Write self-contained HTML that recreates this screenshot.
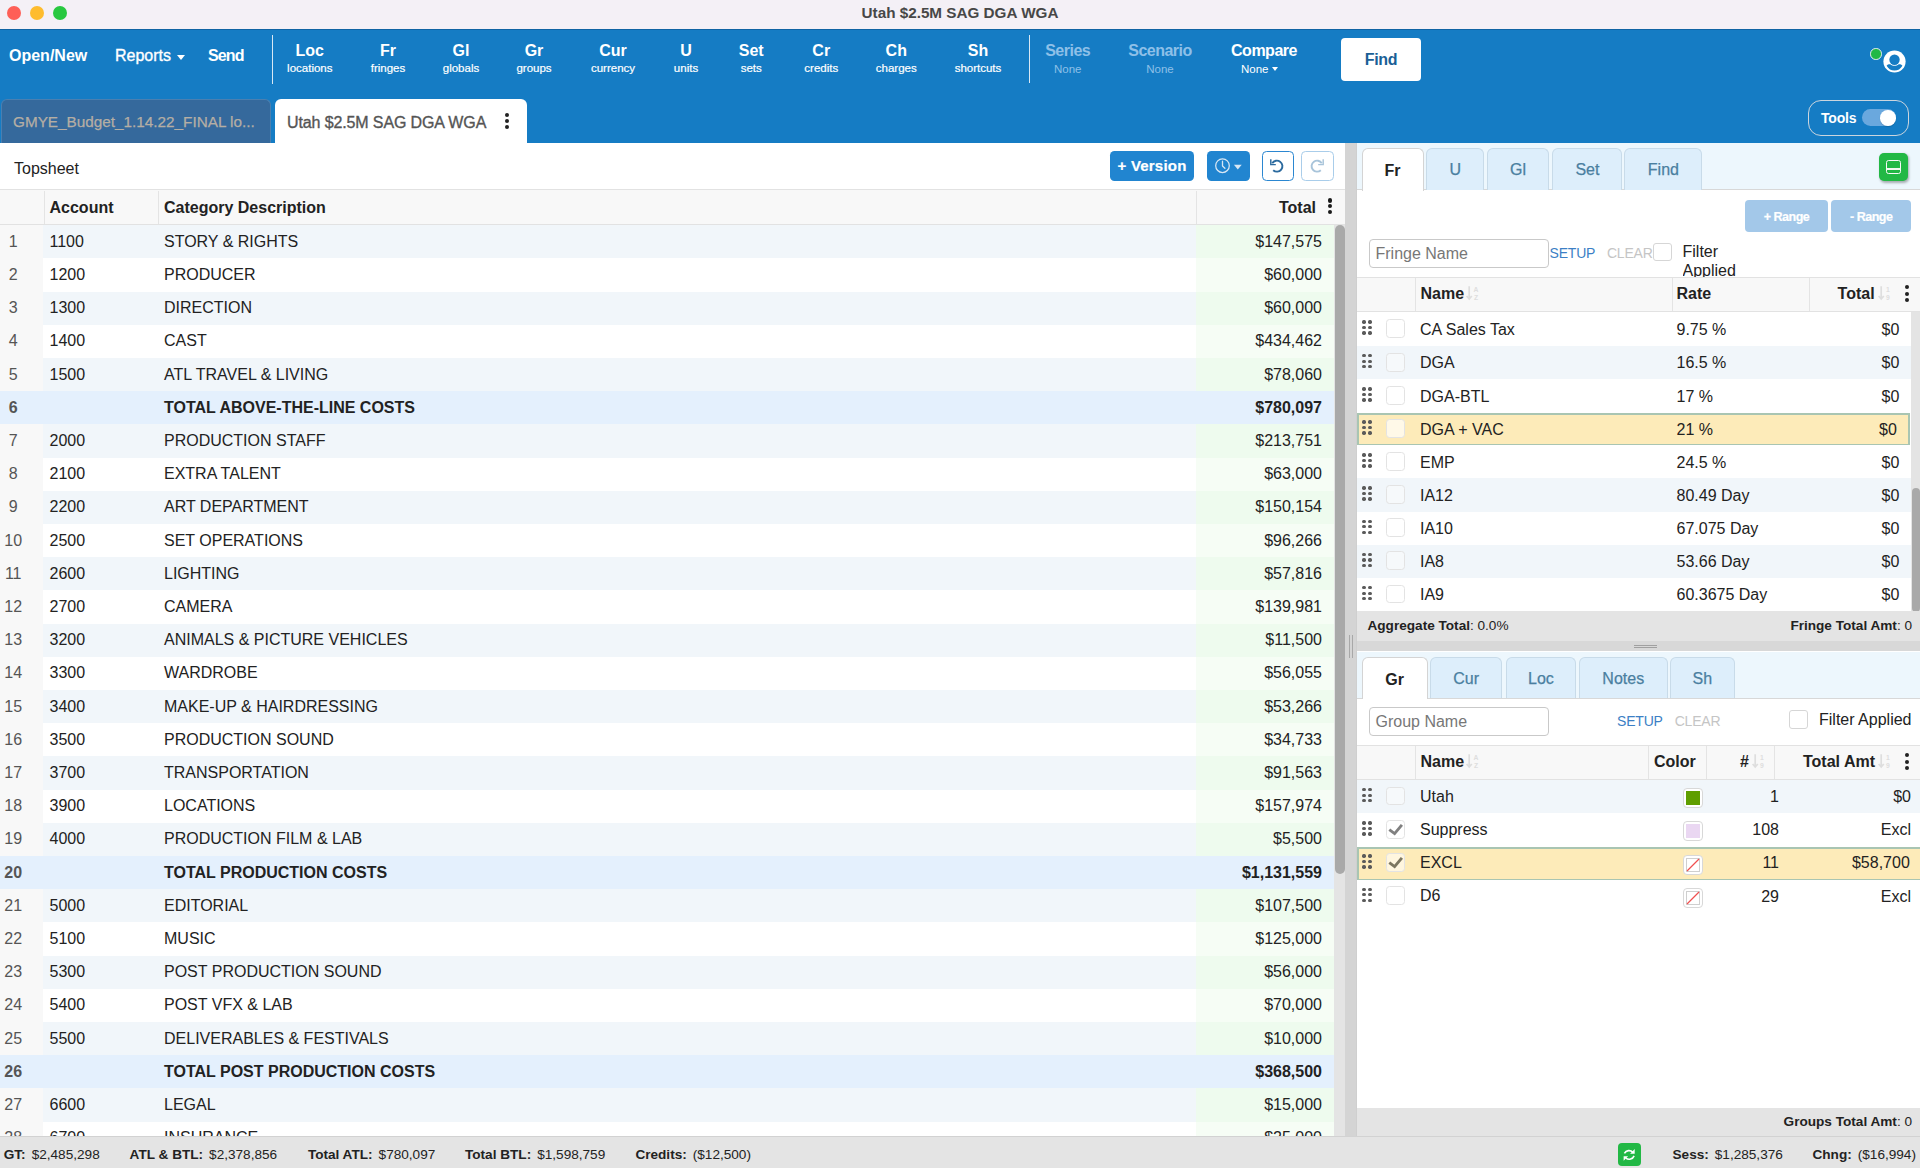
<!DOCTYPE html>
<html><head><meta charset="utf-8"><style>
*{box-sizing:border-box;margin:0;padding:0}
html,body{width:1920px;height:1168px;overflow:hidden;background:#fff;font-family:"Liberation Sans", sans-serif;}
.a{position:absolute;white-space:nowrap}
.tb-main{position:absolute;color:#fff;font-weight:700;font-size:16px;line-height:16px;text-align:center;width:120px}
.tb-sub{position:absolute;color:#fff;font-size:11.5px;line-height:12px;text-align:center;width:120px}
.row{position:absolute;left:0;width:1334px;height:34px}
.cell{position:absolute;top:0;height:100%;font-size:16px;color:#222;display:flex;align-items:center;white-space:nowrap}
</style></head><body>

<div class="a" style="left:0;top:0;width:1920px;height:29px;background:#f4f0f6"></div>
<div class="a" style="left:6.5px;top:6px;width:14px;height:14px;border-radius:50%;background:#fe5f57"></div>
<div class="a" style="left:29.5px;top:6px;width:14px;height:14px;border-radius:50%;background:#febc2e"></div>
<div class="a" style="left:52.5px;top:6px;width:14px;height:14px;border-radius:50%;background:#28c840"></div>
<div class="a" style="left:0;top:0;width:1920px;height:29px;line-height:25px;text-align:center;font-size:15.25px;font-weight:700;color:#474747">Utah $2.5M SAG DGA WGA</div>
<div class="a" style="left:0;top:28.6px;width:1920px;height:114.4px;background:#157cc4;border-top:1px solid #0f63a3"></div>
<div class="a" style="left:9px;top:45.8px;font-size:16px;font-weight:700;color:#fff;line-height:20px">Open/New</div>
<div class="a" style="left:115px;top:45.8px;font-size:16px;color:#fff;line-height:20px;-webkit-text-stroke:0.35px #fff">Reports</div>
<div class="a" style="left:177px;top:54.5px;width:0;height:0;border-left:4.5px solid transparent;border-right:4.5px solid transparent;border-top:5px solid #fff"></div>
<div class="a" style="left:208px;top:45.8px;font-size:16px;font-weight:700;color:#fff;line-height:20px;letter-spacing:-0.9px">Send</div>
<div class="a" style="left:271.5px;top:35px;width:1.5px;height:49px;background:#d8e8f4"></div>
<div class="a" style="left:1028.5px;top:35px;width:1.5px;height:48px;background:#d8e8f4"></div>
<div class="tb-main" style="left:249.8px;top:43.3px">Loc</div>
<div class="tb-sub" style="left:249.8px;top:62px;-webkit-text-stroke:0.2px #fff">locations</div>
<div class="tb-main" style="left:328px;top:43.3px">Fr</div>
<div class="tb-sub" style="left:328px;top:62px;-webkit-text-stroke:0.2px #fff">fringes</div>
<div class="tb-main" style="left:401px;top:43.3px">Gl</div>
<div class="tb-sub" style="left:401px;top:62px;-webkit-text-stroke:0.2px #fff">globals</div>
<div class="tb-main" style="left:474px;top:43.3px">Gr</div>
<div class="tb-sub" style="left:474px;top:62px;-webkit-text-stroke:0.2px #fff">groups</div>
<div class="tb-main" style="left:553px;top:43.3px">Cur</div>
<div class="tb-sub" style="left:553px;top:62px;-webkit-text-stroke:0.2px #fff">currency</div>
<div class="tb-main" style="left:626px;top:43.3px">U</div>
<div class="tb-sub" style="left:626px;top:62px;-webkit-text-stroke:0.2px #fff">units</div>
<div class="tb-main" style="left:691.25px;top:43.3px">Set</div>
<div class="tb-sub" style="left:691.25px;top:62px;-webkit-text-stroke:0.2px #fff">sets</div>
<div class="tb-main" style="left:761.25px;top:43.3px">Cr</div>
<div class="tb-sub" style="left:761.25px;top:62px;-webkit-text-stroke:0.2px #fff">credits</div>
<div class="tb-main" style="left:836.25px;top:43.3px">Ch</div>
<div class="tb-sub" style="left:836.25px;top:62px;-webkit-text-stroke:0.2px #fff">charges</div>
<div class="tb-main" style="left:918px;top:43.3px">Sh</div>
<div class="tb-sub" style="left:918px;top:62px;-webkit-text-stroke:0.2px #fff">shortcuts</div>
<div class="tb-main" style="left:1007.7px;top:43.3px;color:#8ec0e8;letter-spacing:-0.5px">Series</div>
<div class="tb-sub" style="left:1007.7px;top:62.5px;color:#8ec0e8">None</div>
<div class="tb-main" style="left:1100px;top:43.3px;color:#8ec0e8;letter-spacing:-0.5px">Scenario</div>
<div class="tb-sub" style="left:1100px;top:62.5px;color:#8ec0e8">None</div>
<div class="tb-main" style="left:1204px;top:43.3px;letter-spacing:-0.5px">Compare</div>
<div class="a" style="left:1241px;top:62.5px;font-size:11.5px;line-height:12px;color:#fff">None</div>
<div class="a" style="left:1271.5px;top:67px;width:0;height:0;border-left:3.5px solid transparent;border-right:3.5px solid transparent;border-top:4px solid #fff"></div>
<div class="a" style="left:1341px;top:38px;width:80px;height:43px;background:#fff;border-radius:4px;text-align:center;line-height:43px;font-size:16px;font-weight:700;color:#1a5f96;letter-spacing:-0.3px">Find</div>
<div class="a" style="left:1870px;top:48.3px;width:11.5px;height:11.5px;border-radius:50%;background:#22b845;border:1.2px solid #e8f0f0"></div>
<svg class="a" style="left:1882.5px;top:50px" width="23" height="23" viewBox="0 0 23 23"><circle cx="11.5" cy="11.5" r="11.1" fill="#fff"/><circle cx="11.5" cy="9.7" r="5.2" fill="#157cc4"/><path d="M3.6 15.7 C4.6 14.5 6 14.2 7.6 14.4 C9.2 16.3 13.8 16.3 15.4 14.4 C17 14.2 18.4 14.5 19.4 15.7 C17.6 18.9 14.8 20.6 11.5 20.6 C8.2 20.6 5.4 18.9 3.6 15.7 Z" fill="#157cc4"/></svg>
<div class="a" style="left:1px;top:99px;width:270px;height:44px;background:#35699c;border-radius:6px 6px 0 0;border:1px solid #4a7fb0;border-bottom:none"></div>
<div class="a" style="left:13px;top:112px;font-size:15.3px;line-height:20px;color:#b5aea4;-webkit-text-stroke:0.25px #b5aea4">GMYE_Budget_1.14.22_FINAL lo...</div>
<div class="a" style="left:275px;top:99px;width:252px;height:45px;background:#fff;border-radius:6px 6px 0 0"></div>
<div class="a" style="left:287px;top:112.5px;font-size:16px;line-height:20px;color:#555;letter-spacing:-0.12px;-webkit-text-stroke:0.35px #555">Utah $2.5M SAG DGA WGA</div>
<div class="a" style="left:505px;top:113.2px;width:4px;height:4px;border-radius:50%;background:#222"></div>
<div class="a" style="left:505px;top:119.2px;width:4px;height:4px;border-radius:50%;background:#222"></div>
<div class="a" style="left:505px;top:125.2px;width:4px;height:4px;border-radius:50%;background:#222"></div>
<div class="a" style="left:1808px;top:100px;width:101px;height:35.5px;border:1.2px solid #cbd5de;border-radius:13px"></div>
<div class="a" style="left:1821px;top:108.7px;font-size:14px;line-height:18px;font-weight:700;color:#fff;letter-spacing:-0.2px">Tools</div>
<div class="a" style="left:1862px;top:109px;width:34px;height:17px;border-radius:9px;background:#6aa8de"></div>
<div class="a" style="left:1880px;top:110px;width:15.5px;height:15.5px;border-radius:50%;background:#fff;box-shadow:0 1px 1px rgba(0,0,0,.15)"></div>
<div class="a" style="left:0;top:143px;width:1345px;height:993px;background:#fff;overflow:hidden">
<div class="a" style="left:14px;top:16px;font-size:16px;line-height:20px;color:#222">Topsheet</div>
<div class="a" style="left:1110.3px;top:8.3px;width:83.5px;height:29.7px;background:#2185d0;border-radius:4.5px;color:#fff;font-weight:700;font-size:15px;line-height:29.7px;text-align:center;letter-spacing:0.2px;-webkit-text-stroke:0.2px #fff">+ Version</div>
<div class="a" style="left:1206.8px;top:8.3px;width:43px;height:29.7px;background:#2185d0;border-radius:4.5px"></div>
<svg class="a" style="left:1206.8px;top:8.3px" width="43" height="30" viewBox="0 0 43 30"><circle cx="15.5" cy="14.7" r="6.8" fill="none" stroke="#d8e7f4" stroke-width="1.25"/><path d="M15.5 10.2 V15 L17.9 17.2" fill="none" stroke="#d8e7f4" stroke-width="1.3" stroke-linecap="round" stroke-linejoin="round"/><path d="M26.9 13.8 H34.7 L30.8 18.5 Z" fill="#d8e7f4"/></svg>
<div class="a" style="left:1262px;top:8.4px;width:31.8px;height:29.5px;border:1.25px solid #2b87d1;border-radius:4.5px;background:#fff"></div>
<svg class="a" style="left:1266.4px;top:11.6px" width="22" height="22" viewBox="0 0 22 22"><path d="M6.24 8.25 A5.5 5.5 0 1 1 7.2 15.2" fill="none" stroke="#2b6a9e" stroke-width="1.9"/><path d="M4.8 4.3 V9.6 H9.8" fill="none" stroke="#2b6a9e" stroke-width="1.45"/></svg>
<div class="a" style="left:1301px;top:8.4px;width:32.8px;height:29.5px;border:1.25px solid #a9cdea;border-radius:4.5px;background:#fff"></div>
<svg class="a" style="left:1306px;top:11.6px" width="22" height="22" viewBox="0 0 22 22"><path d="M15.76 8.25 A5.5 5.5 0 1 0 14.8 15.2" fill="none" stroke="#a8c4da" stroke-width="1.9"/><path d="M17.2 4.3 V9.6 H12.2" fill="none" stroke="#a8c4da" stroke-width="1.45"/></svg>
<div class="a" style="left:0;top:45.8px;width:1345px;height:36px;background:#f8f8f8;border-top:1.5px solid #e2e2e2;border-bottom:1.5px solid #e2e2e2"></div>
<div class="a" style="left:43.5px;top:47.5px;width:1px;height:33px;background:#e4e4e4"></div>
<div class="a" style="left:158px;top:47.5px;width:1px;height:33px;background:#e4e4e4"></div>
<div class="a" style="left:1196px;top:47.5px;width:1px;height:33px;background:#e4e4e4"></div>
<div class="a" style="left:49.5px;top:54.5px;font-size:16px;line-height:20px;font-weight:700;color:#222">Account</div>
<div class="a" style="left:164px;top:54.5px;font-size:16px;line-height:20px;font-weight:700;color:#222">Category Description</div>
<div class="a" style="left:1216px;top:54.5px;width:100px;text-align:right;font-size:16px;line-height:20px;font-weight:700;color:#222">Total</div>
<div class="a" style="left:1327.55px;top:55.3px;width:4.4px;height:4.4px;border-radius:50%;background:#1a1a1a"></div>
<div class="a" style="left:1327.55px;top:60.89999999999999px;width:4.4px;height:4.4px;border-radius:50%;background:#1a1a1a"></div>
<div class="a" style="left:1327.55px;top:66.49999999999999px;width:4.4px;height:4.4px;border-radius:50%;background:#1a1a1a"></div>
<div class="a" style="left:0;top:82.20px;width:1334px;height:33.60px">
<div class="a" style="left:0;top:0;width:43.2px;height:100%;background:#f8f8f8"></div>
<div class="a" style="left:43.2px;top:0;width:1152.8px;height:100%;background:#f1f6fa"></div>
<div class="a" style="left:1196px;top:0;width:138px;height:100%;background:#eefbee"></div>
<div class="a" style="left:0.4px;top:6.7px;width:25.6px;text-align:center;font-size:16px;line-height:20px;color:#555;font-weight:400">1</div>
<div class="a" style="left:49.5px;top:6.7px;font-size:16px;line-height:20px;color:#222">1100</div>
<div class="a" style="left:164px;top:6.7px;font-size:16px;line-height:20px;color:#222;font-weight:400">STORY &amp; RIGHTS</div>
<div class="a" style="left:1122px;top:6.7px;width:200px;text-align:right;font-size:16px;line-height:20px;color:#222;font-weight:400">$147,575</div>
</div>
<div class="a" style="left:0;top:115.40px;width:1334px;height:33.60px">
<div class="a" style="left:0;top:0;width:43.2px;height:100%;background:#f8f8f8"></div>
<div class="a" style="left:43.2px;top:0;width:1152.8px;height:100%;background:#ffffff"></div>
<div class="a" style="left:1196px;top:0;width:138px;height:100%;background:#f6fdf5"></div>
<div class="a" style="left:0.4px;top:6.7px;width:25.6px;text-align:center;font-size:16px;line-height:20px;color:#555;font-weight:400">2</div>
<div class="a" style="left:49.5px;top:6.7px;font-size:16px;line-height:20px;color:#222">1200</div>
<div class="a" style="left:164px;top:6.7px;font-size:16px;line-height:20px;color:#222;font-weight:400">PRODUCER</div>
<div class="a" style="left:1122px;top:6.7px;width:200px;text-align:right;font-size:16px;line-height:20px;color:#222;font-weight:400">$60,000</div>
</div>
<div class="a" style="left:0;top:148.60px;width:1334px;height:33.60px">
<div class="a" style="left:0;top:0;width:43.2px;height:100%;background:#f8f8f8"></div>
<div class="a" style="left:43.2px;top:0;width:1152.8px;height:100%;background:#f1f6fa"></div>
<div class="a" style="left:1196px;top:0;width:138px;height:100%;background:#eefbee"></div>
<div class="a" style="left:0.4px;top:6.7px;width:25.6px;text-align:center;font-size:16px;line-height:20px;color:#555;font-weight:400">3</div>
<div class="a" style="left:49.5px;top:6.7px;font-size:16px;line-height:20px;color:#222">1300</div>
<div class="a" style="left:164px;top:6.7px;font-size:16px;line-height:20px;color:#222;font-weight:400">DIRECTION</div>
<div class="a" style="left:1122px;top:6.7px;width:200px;text-align:right;font-size:16px;line-height:20px;color:#222;font-weight:400">$60,000</div>
</div>
<div class="a" style="left:0;top:181.80px;width:1334px;height:33.60px">
<div class="a" style="left:0;top:0;width:43.2px;height:100%;background:#f8f8f8"></div>
<div class="a" style="left:43.2px;top:0;width:1152.8px;height:100%;background:#ffffff"></div>
<div class="a" style="left:1196px;top:0;width:138px;height:100%;background:#f6fdf5"></div>
<div class="a" style="left:0.4px;top:6.7px;width:25.6px;text-align:center;font-size:16px;line-height:20px;color:#555;font-weight:400">4</div>
<div class="a" style="left:49.5px;top:6.7px;font-size:16px;line-height:20px;color:#222">1400</div>
<div class="a" style="left:164px;top:6.7px;font-size:16px;line-height:20px;color:#222;font-weight:400">CAST</div>
<div class="a" style="left:1122px;top:6.7px;width:200px;text-align:right;font-size:16px;line-height:20px;color:#222;font-weight:400">$434,462</div>
</div>
<div class="a" style="left:0;top:215.00px;width:1334px;height:33.60px">
<div class="a" style="left:0;top:0;width:43.2px;height:100%;background:#f8f8f8"></div>
<div class="a" style="left:43.2px;top:0;width:1152.8px;height:100%;background:#f1f6fa"></div>
<div class="a" style="left:1196px;top:0;width:138px;height:100%;background:#eefbee"></div>
<div class="a" style="left:0.4px;top:6.7px;width:25.6px;text-align:center;font-size:16px;line-height:20px;color:#555;font-weight:400">5</div>
<div class="a" style="left:49.5px;top:6.7px;font-size:16px;line-height:20px;color:#222">1500</div>
<div class="a" style="left:164px;top:6.7px;font-size:16px;line-height:20px;color:#222;font-weight:400">ATL TRAVEL &amp; LIVING</div>
<div class="a" style="left:1122px;top:6.7px;width:200px;text-align:right;font-size:16px;line-height:20px;color:#222;font-weight:400">$78,060</div>
</div>
<div class="a" style="left:0;top:248.20px;width:1334px;height:33.60px">
<div class="a" style="left:0;top:0;width:43.2px;height:100%;background:#e4f0fd"></div>
<div class="a" style="left:43.2px;top:0;width:1152.8px;height:100%;background:#e4f0fd"></div>
<div class="a" style="left:1196px;top:0;width:138px;height:100%;background:#e4f0fd"></div>
<div class="a" style="left:0.4px;top:6.7px;width:25.6px;text-align:center;font-size:16px;line-height:20px;color:#555;font-weight:700">6</div>
<div class="a" style="left:164px;top:6.7px;font-size:16px;line-height:20px;color:#222;font-weight:700">TOTAL ABOVE-THE-LINE COSTS</div>
<div class="a" style="left:1122px;top:6.7px;width:200px;text-align:right;font-size:16px;line-height:20px;color:#222;font-weight:700">$780,097</div>
</div>
<div class="a" style="left:0;top:281.40px;width:1334px;height:33.60px">
<div class="a" style="left:0;top:0;width:43.2px;height:100%;background:#f8f8f8"></div>
<div class="a" style="left:43.2px;top:0;width:1152.8px;height:100%;background:#f1f6fa"></div>
<div class="a" style="left:1196px;top:0;width:138px;height:100%;background:#eefbee"></div>
<div class="a" style="left:0.4px;top:6.7px;width:25.6px;text-align:center;font-size:16px;line-height:20px;color:#555;font-weight:400">7</div>
<div class="a" style="left:49.5px;top:6.7px;font-size:16px;line-height:20px;color:#222">2000</div>
<div class="a" style="left:164px;top:6.7px;font-size:16px;line-height:20px;color:#222;font-weight:400">PRODUCTION STAFF</div>
<div class="a" style="left:1122px;top:6.7px;width:200px;text-align:right;font-size:16px;line-height:20px;color:#222;font-weight:400">$213,751</div>
</div>
<div class="a" style="left:0;top:314.60px;width:1334px;height:33.60px">
<div class="a" style="left:0;top:0;width:43.2px;height:100%;background:#f8f8f8"></div>
<div class="a" style="left:43.2px;top:0;width:1152.8px;height:100%;background:#ffffff"></div>
<div class="a" style="left:1196px;top:0;width:138px;height:100%;background:#f6fdf5"></div>
<div class="a" style="left:0.4px;top:6.7px;width:25.6px;text-align:center;font-size:16px;line-height:20px;color:#555;font-weight:400">8</div>
<div class="a" style="left:49.5px;top:6.7px;font-size:16px;line-height:20px;color:#222">2100</div>
<div class="a" style="left:164px;top:6.7px;font-size:16px;line-height:20px;color:#222;font-weight:400">EXTRA TALENT</div>
<div class="a" style="left:1122px;top:6.7px;width:200px;text-align:right;font-size:16px;line-height:20px;color:#222;font-weight:400">$63,000</div>
</div>
<div class="a" style="left:0;top:347.80px;width:1334px;height:33.60px">
<div class="a" style="left:0;top:0;width:43.2px;height:100%;background:#f8f8f8"></div>
<div class="a" style="left:43.2px;top:0;width:1152.8px;height:100%;background:#f1f6fa"></div>
<div class="a" style="left:1196px;top:0;width:138px;height:100%;background:#eefbee"></div>
<div class="a" style="left:0.4px;top:6.7px;width:25.6px;text-align:center;font-size:16px;line-height:20px;color:#555;font-weight:400">9</div>
<div class="a" style="left:49.5px;top:6.7px;font-size:16px;line-height:20px;color:#222">2200</div>
<div class="a" style="left:164px;top:6.7px;font-size:16px;line-height:20px;color:#222;font-weight:400">ART DEPARTMENT</div>
<div class="a" style="left:1122px;top:6.7px;width:200px;text-align:right;font-size:16px;line-height:20px;color:#222;font-weight:400">$150,154</div>
</div>
<div class="a" style="left:0;top:381.00px;width:1334px;height:33.60px">
<div class="a" style="left:0;top:0;width:43.2px;height:100%;background:#f8f8f8"></div>
<div class="a" style="left:43.2px;top:0;width:1152.8px;height:100%;background:#ffffff"></div>
<div class="a" style="left:1196px;top:0;width:138px;height:100%;background:#f6fdf5"></div>
<div class="a" style="left:0.4px;top:6.7px;width:25.6px;text-align:center;font-size:16px;line-height:20px;color:#555;font-weight:400">10</div>
<div class="a" style="left:49.5px;top:6.7px;font-size:16px;line-height:20px;color:#222">2500</div>
<div class="a" style="left:164px;top:6.7px;font-size:16px;line-height:20px;color:#222;font-weight:400">SET OPERATIONS</div>
<div class="a" style="left:1122px;top:6.7px;width:200px;text-align:right;font-size:16px;line-height:20px;color:#222;font-weight:400">$96,266</div>
</div>
<div class="a" style="left:0;top:414.20px;width:1334px;height:33.60px">
<div class="a" style="left:0;top:0;width:43.2px;height:100%;background:#f8f8f8"></div>
<div class="a" style="left:43.2px;top:0;width:1152.8px;height:100%;background:#f1f6fa"></div>
<div class="a" style="left:1196px;top:0;width:138px;height:100%;background:#eefbee"></div>
<div class="a" style="left:0.4px;top:6.7px;width:25.6px;text-align:center;font-size:16px;line-height:20px;color:#555;font-weight:400">11</div>
<div class="a" style="left:49.5px;top:6.7px;font-size:16px;line-height:20px;color:#222">2600</div>
<div class="a" style="left:164px;top:6.7px;font-size:16px;line-height:20px;color:#222;font-weight:400">LIGHTING</div>
<div class="a" style="left:1122px;top:6.7px;width:200px;text-align:right;font-size:16px;line-height:20px;color:#222;font-weight:400">$57,816</div>
</div>
<div class="a" style="left:0;top:447.40px;width:1334px;height:33.60px">
<div class="a" style="left:0;top:0;width:43.2px;height:100%;background:#f8f8f8"></div>
<div class="a" style="left:43.2px;top:0;width:1152.8px;height:100%;background:#ffffff"></div>
<div class="a" style="left:1196px;top:0;width:138px;height:100%;background:#f6fdf5"></div>
<div class="a" style="left:0.4px;top:6.7px;width:25.6px;text-align:center;font-size:16px;line-height:20px;color:#555;font-weight:400">12</div>
<div class="a" style="left:49.5px;top:6.7px;font-size:16px;line-height:20px;color:#222">2700</div>
<div class="a" style="left:164px;top:6.7px;font-size:16px;line-height:20px;color:#222;font-weight:400">CAMERA</div>
<div class="a" style="left:1122px;top:6.7px;width:200px;text-align:right;font-size:16px;line-height:20px;color:#222;font-weight:400">$139,981</div>
</div>
<div class="a" style="left:0;top:480.60px;width:1334px;height:33.60px">
<div class="a" style="left:0;top:0;width:43.2px;height:100%;background:#f8f8f8"></div>
<div class="a" style="left:43.2px;top:0;width:1152.8px;height:100%;background:#f1f6fa"></div>
<div class="a" style="left:1196px;top:0;width:138px;height:100%;background:#eefbee"></div>
<div class="a" style="left:0.4px;top:6.7px;width:25.6px;text-align:center;font-size:16px;line-height:20px;color:#555;font-weight:400">13</div>
<div class="a" style="left:49.5px;top:6.7px;font-size:16px;line-height:20px;color:#222">3200</div>
<div class="a" style="left:164px;top:6.7px;font-size:16px;line-height:20px;color:#222;font-weight:400">ANIMALS &amp; PICTURE VEHICLES</div>
<div class="a" style="left:1122px;top:6.7px;width:200px;text-align:right;font-size:16px;line-height:20px;color:#222;font-weight:400">$11,500</div>
</div>
<div class="a" style="left:0;top:513.80px;width:1334px;height:33.60px">
<div class="a" style="left:0;top:0;width:43.2px;height:100%;background:#f8f8f8"></div>
<div class="a" style="left:43.2px;top:0;width:1152.8px;height:100%;background:#ffffff"></div>
<div class="a" style="left:1196px;top:0;width:138px;height:100%;background:#f6fdf5"></div>
<div class="a" style="left:0.4px;top:6.7px;width:25.6px;text-align:center;font-size:16px;line-height:20px;color:#555;font-weight:400">14</div>
<div class="a" style="left:49.5px;top:6.7px;font-size:16px;line-height:20px;color:#222">3300</div>
<div class="a" style="left:164px;top:6.7px;font-size:16px;line-height:20px;color:#222;font-weight:400">WARDROBE</div>
<div class="a" style="left:1122px;top:6.7px;width:200px;text-align:right;font-size:16px;line-height:20px;color:#222;font-weight:400">$56,055</div>
</div>
<div class="a" style="left:0;top:547.00px;width:1334px;height:33.60px">
<div class="a" style="left:0;top:0;width:43.2px;height:100%;background:#f8f8f8"></div>
<div class="a" style="left:43.2px;top:0;width:1152.8px;height:100%;background:#f1f6fa"></div>
<div class="a" style="left:1196px;top:0;width:138px;height:100%;background:#eefbee"></div>
<div class="a" style="left:0.4px;top:6.7px;width:25.6px;text-align:center;font-size:16px;line-height:20px;color:#555;font-weight:400">15</div>
<div class="a" style="left:49.5px;top:6.7px;font-size:16px;line-height:20px;color:#222">3400</div>
<div class="a" style="left:164px;top:6.7px;font-size:16px;line-height:20px;color:#222;font-weight:400">MAKE-UP &amp; HAIRDRESSING</div>
<div class="a" style="left:1122px;top:6.7px;width:200px;text-align:right;font-size:16px;line-height:20px;color:#222;font-weight:400">$53,266</div>
</div>
<div class="a" style="left:0;top:580.20px;width:1334px;height:33.60px">
<div class="a" style="left:0;top:0;width:43.2px;height:100%;background:#f8f8f8"></div>
<div class="a" style="left:43.2px;top:0;width:1152.8px;height:100%;background:#ffffff"></div>
<div class="a" style="left:1196px;top:0;width:138px;height:100%;background:#f6fdf5"></div>
<div class="a" style="left:0.4px;top:6.7px;width:25.6px;text-align:center;font-size:16px;line-height:20px;color:#555;font-weight:400">16</div>
<div class="a" style="left:49.5px;top:6.7px;font-size:16px;line-height:20px;color:#222">3500</div>
<div class="a" style="left:164px;top:6.7px;font-size:16px;line-height:20px;color:#222;font-weight:400">PRODUCTION SOUND</div>
<div class="a" style="left:1122px;top:6.7px;width:200px;text-align:right;font-size:16px;line-height:20px;color:#222;font-weight:400">$34,733</div>
</div>
<div class="a" style="left:0;top:613.40px;width:1334px;height:33.60px">
<div class="a" style="left:0;top:0;width:43.2px;height:100%;background:#f8f8f8"></div>
<div class="a" style="left:43.2px;top:0;width:1152.8px;height:100%;background:#f1f6fa"></div>
<div class="a" style="left:1196px;top:0;width:138px;height:100%;background:#eefbee"></div>
<div class="a" style="left:0.4px;top:6.7px;width:25.6px;text-align:center;font-size:16px;line-height:20px;color:#555;font-weight:400">17</div>
<div class="a" style="left:49.5px;top:6.7px;font-size:16px;line-height:20px;color:#222">3700</div>
<div class="a" style="left:164px;top:6.7px;font-size:16px;line-height:20px;color:#222;font-weight:400">TRANSPORTATION</div>
<div class="a" style="left:1122px;top:6.7px;width:200px;text-align:right;font-size:16px;line-height:20px;color:#222;font-weight:400">$91,563</div>
</div>
<div class="a" style="left:0;top:646.60px;width:1334px;height:33.60px">
<div class="a" style="left:0;top:0;width:43.2px;height:100%;background:#f8f8f8"></div>
<div class="a" style="left:43.2px;top:0;width:1152.8px;height:100%;background:#ffffff"></div>
<div class="a" style="left:1196px;top:0;width:138px;height:100%;background:#f6fdf5"></div>
<div class="a" style="left:0.4px;top:6.7px;width:25.6px;text-align:center;font-size:16px;line-height:20px;color:#555;font-weight:400">18</div>
<div class="a" style="left:49.5px;top:6.7px;font-size:16px;line-height:20px;color:#222">3900</div>
<div class="a" style="left:164px;top:6.7px;font-size:16px;line-height:20px;color:#222;font-weight:400">LOCATIONS</div>
<div class="a" style="left:1122px;top:6.7px;width:200px;text-align:right;font-size:16px;line-height:20px;color:#222;font-weight:400">$157,974</div>
</div>
<div class="a" style="left:0;top:679.80px;width:1334px;height:33.60px">
<div class="a" style="left:0;top:0;width:43.2px;height:100%;background:#f8f8f8"></div>
<div class="a" style="left:43.2px;top:0;width:1152.8px;height:100%;background:#f1f6fa"></div>
<div class="a" style="left:1196px;top:0;width:138px;height:100%;background:#eefbee"></div>
<div class="a" style="left:0.4px;top:6.7px;width:25.6px;text-align:center;font-size:16px;line-height:20px;color:#555;font-weight:400">19</div>
<div class="a" style="left:49.5px;top:6.7px;font-size:16px;line-height:20px;color:#222">4000</div>
<div class="a" style="left:164px;top:6.7px;font-size:16px;line-height:20px;color:#222;font-weight:400">PRODUCTION FILM &amp; LAB</div>
<div class="a" style="left:1122px;top:6.7px;width:200px;text-align:right;font-size:16px;line-height:20px;color:#222;font-weight:400">$5,500</div>
</div>
<div class="a" style="left:0;top:713.00px;width:1334px;height:33.60px">
<div class="a" style="left:0;top:0;width:43.2px;height:100%;background:#e4f0fd"></div>
<div class="a" style="left:43.2px;top:0;width:1152.8px;height:100%;background:#e4f0fd"></div>
<div class="a" style="left:1196px;top:0;width:138px;height:100%;background:#e4f0fd"></div>
<div class="a" style="left:0.4px;top:6.7px;width:25.6px;text-align:center;font-size:16px;line-height:20px;color:#555;font-weight:700">20</div>
<div class="a" style="left:164px;top:6.7px;font-size:16px;line-height:20px;color:#222;font-weight:700">TOTAL PRODUCTION COSTS</div>
<div class="a" style="left:1122px;top:6.7px;width:200px;text-align:right;font-size:16px;line-height:20px;color:#222;font-weight:700">$1,131,559</div>
</div>
<div class="a" style="left:0;top:746.20px;width:1334px;height:33.60px">
<div class="a" style="left:0;top:0;width:43.2px;height:100%;background:#f8f8f8"></div>
<div class="a" style="left:43.2px;top:0;width:1152.8px;height:100%;background:#f1f6fa"></div>
<div class="a" style="left:1196px;top:0;width:138px;height:100%;background:#eefbee"></div>
<div class="a" style="left:0.4px;top:6.7px;width:25.6px;text-align:center;font-size:16px;line-height:20px;color:#555;font-weight:400">21</div>
<div class="a" style="left:49.5px;top:6.7px;font-size:16px;line-height:20px;color:#222">5000</div>
<div class="a" style="left:164px;top:6.7px;font-size:16px;line-height:20px;color:#222;font-weight:400">EDITORIAL</div>
<div class="a" style="left:1122px;top:6.7px;width:200px;text-align:right;font-size:16px;line-height:20px;color:#222;font-weight:400">$107,500</div>
</div>
<div class="a" style="left:0;top:779.40px;width:1334px;height:33.60px">
<div class="a" style="left:0;top:0;width:43.2px;height:100%;background:#f8f8f8"></div>
<div class="a" style="left:43.2px;top:0;width:1152.8px;height:100%;background:#ffffff"></div>
<div class="a" style="left:1196px;top:0;width:138px;height:100%;background:#f6fdf5"></div>
<div class="a" style="left:0.4px;top:6.7px;width:25.6px;text-align:center;font-size:16px;line-height:20px;color:#555;font-weight:400">22</div>
<div class="a" style="left:49.5px;top:6.7px;font-size:16px;line-height:20px;color:#222">5100</div>
<div class="a" style="left:164px;top:6.7px;font-size:16px;line-height:20px;color:#222;font-weight:400">MUSIC</div>
<div class="a" style="left:1122px;top:6.7px;width:200px;text-align:right;font-size:16px;line-height:20px;color:#222;font-weight:400">$125,000</div>
</div>
<div class="a" style="left:0;top:812.60px;width:1334px;height:33.60px">
<div class="a" style="left:0;top:0;width:43.2px;height:100%;background:#f8f8f8"></div>
<div class="a" style="left:43.2px;top:0;width:1152.8px;height:100%;background:#f1f6fa"></div>
<div class="a" style="left:1196px;top:0;width:138px;height:100%;background:#eefbee"></div>
<div class="a" style="left:0.4px;top:6.7px;width:25.6px;text-align:center;font-size:16px;line-height:20px;color:#555;font-weight:400">23</div>
<div class="a" style="left:49.5px;top:6.7px;font-size:16px;line-height:20px;color:#222">5300</div>
<div class="a" style="left:164px;top:6.7px;font-size:16px;line-height:20px;color:#222;font-weight:400">POST PRODUCTION SOUND</div>
<div class="a" style="left:1122px;top:6.7px;width:200px;text-align:right;font-size:16px;line-height:20px;color:#222;font-weight:400">$56,000</div>
</div>
<div class="a" style="left:0;top:845.80px;width:1334px;height:33.60px">
<div class="a" style="left:0;top:0;width:43.2px;height:100%;background:#f8f8f8"></div>
<div class="a" style="left:43.2px;top:0;width:1152.8px;height:100%;background:#ffffff"></div>
<div class="a" style="left:1196px;top:0;width:138px;height:100%;background:#f6fdf5"></div>
<div class="a" style="left:0.4px;top:6.7px;width:25.6px;text-align:center;font-size:16px;line-height:20px;color:#555;font-weight:400">24</div>
<div class="a" style="left:49.5px;top:6.7px;font-size:16px;line-height:20px;color:#222">5400</div>
<div class="a" style="left:164px;top:6.7px;font-size:16px;line-height:20px;color:#222;font-weight:400">POST VFX &amp; LAB</div>
<div class="a" style="left:1122px;top:6.7px;width:200px;text-align:right;font-size:16px;line-height:20px;color:#222;font-weight:400">$70,000</div>
</div>
<div class="a" style="left:0;top:879.00px;width:1334px;height:33.60px">
<div class="a" style="left:0;top:0;width:43.2px;height:100%;background:#f8f8f8"></div>
<div class="a" style="left:43.2px;top:0;width:1152.8px;height:100%;background:#f1f6fa"></div>
<div class="a" style="left:1196px;top:0;width:138px;height:100%;background:#eefbee"></div>
<div class="a" style="left:0.4px;top:6.7px;width:25.6px;text-align:center;font-size:16px;line-height:20px;color:#555;font-weight:400">25</div>
<div class="a" style="left:49.5px;top:6.7px;font-size:16px;line-height:20px;color:#222">5500</div>
<div class="a" style="left:164px;top:6.7px;font-size:16px;line-height:20px;color:#222;font-weight:400">DELIVERABLES &amp; FESTIVALS</div>
<div class="a" style="left:1122px;top:6.7px;width:200px;text-align:right;font-size:16px;line-height:20px;color:#222;font-weight:400">$10,000</div>
</div>
<div class="a" style="left:0;top:912.20px;width:1334px;height:33.60px">
<div class="a" style="left:0;top:0;width:43.2px;height:100%;background:#e4f0fd"></div>
<div class="a" style="left:43.2px;top:0;width:1152.8px;height:100%;background:#e4f0fd"></div>
<div class="a" style="left:1196px;top:0;width:138px;height:100%;background:#e4f0fd"></div>
<div class="a" style="left:0.4px;top:6.7px;width:25.6px;text-align:center;font-size:16px;line-height:20px;color:#555;font-weight:700">26</div>
<div class="a" style="left:164px;top:6.7px;font-size:16px;line-height:20px;color:#222;font-weight:700">TOTAL POST PRODUCTION COSTS</div>
<div class="a" style="left:1122px;top:6.7px;width:200px;text-align:right;font-size:16px;line-height:20px;color:#222;font-weight:700">$368,500</div>
</div>
<div class="a" style="left:0;top:945.40px;width:1334px;height:33.60px">
<div class="a" style="left:0;top:0;width:43.2px;height:100%;background:#f8f8f8"></div>
<div class="a" style="left:43.2px;top:0;width:1152.8px;height:100%;background:#f1f6fa"></div>
<div class="a" style="left:1196px;top:0;width:138px;height:100%;background:#eefbee"></div>
<div class="a" style="left:0.4px;top:6.7px;width:25.6px;text-align:center;font-size:16px;line-height:20px;color:#555;font-weight:400">27</div>
<div class="a" style="left:49.5px;top:6.7px;font-size:16px;line-height:20px;color:#222">6600</div>
<div class="a" style="left:164px;top:6.7px;font-size:16px;line-height:20px;color:#222;font-weight:400">LEGAL</div>
<div class="a" style="left:1122px;top:6.7px;width:200px;text-align:right;font-size:16px;line-height:20px;color:#222;font-weight:400">$15,000</div>
</div>
<div class="a" style="left:0;top:978.60px;width:1334px;height:33.60px">
<div class="a" style="left:0;top:0;width:43.2px;height:100%;background:#f8f8f8"></div>
<div class="a" style="left:43.2px;top:0;width:1152.8px;height:100%;background:#ffffff"></div>
<div class="a" style="left:1196px;top:0;width:138px;height:100%;background:#f6fdf5"></div>
<div class="a" style="left:0.4px;top:6.7px;width:25.6px;text-align:center;font-size:16px;line-height:20px;color:#555;font-weight:400">28</div>
<div class="a" style="left:49.5px;top:6.7px;font-size:16px;line-height:20px;color:#222">6700</div>
<div class="a" style="left:164px;top:6.7px;font-size:16px;line-height:20px;color:#222;font-weight:400">INSURANCE</div>
<div class="a" style="left:1122px;top:6.7px;width:200px;text-align:right;font-size:16px;line-height:20px;color:#222;font-weight:400">$25,000</div>
</div>
<div class="a" style="left:1334px;top:82px;width:11px;height:911px;background:#e4e4e4"></div>
<div class="a" style="left:1334.5px;top:82px;width:10.5px;height:649px;background:#a9a9a9;border-radius:6px 6px 6px 6px"></div>
</div>
<div class="a" style="left:1345px;top:143px;width:12px;height:993px;background:#d4d4d4"></div>
<div class="a" style="left:1349px;top:635px;width:1px;height:23px;background:#a8a8a8"></div>
<div class="a" style="left:1352px;top:635px;width:1px;height:23px;background:#a8a8a8"></div>
<div class="a" style="left:1356px;top:143px;width:1px;height:993px;background:#cfcfcf"></div>
<div class="a" style="left:1357px;top:143px;width:563px;height:47px;background:#edf7fd;border-bottom:1.3px solid #d8d8d8"></div>
<div class="a" style="left:1361.5px;top:148px;width:62.200000000000045px;height:43.0px;background:#fff;border:1.3px solid #d4d4d4;border-bottom:none;border-radius:6px 6px 0 0;text-align:center;font-size:16px;font-weight:700;color:#222;line-height:43.5px">Fr</div>
<div class="a" style="left:1426px;top:148px;width:58.40000000000009px;height:41.5px;background:#ddeefb;border:1.3px solid #c8dbe9;border-bottom:none;border-radius:6px 6px 0 0;text-align:center;font-size:16px;color:#4a7fa0;-webkit-text-stroke:0.25px #4a7fa0;line-height:42.5px">U</div>
<div class="a" style="left:1486.8px;top:148px;width:62.600000000000136px;height:41.5px;background:#ddeefb;border:1.3px solid #c8dbe9;border-bottom:none;border-radius:6px 6px 0 0;text-align:center;font-size:16px;color:#4a7fa0;-webkit-text-stroke:0.25px #4a7fa0;line-height:42.5px">Gl</div>
<div class="a" style="left:1552.4px;top:148px;width:70.09999999999991px;height:41.5px;background:#ddeefb;border:1.3px solid #c8dbe9;border-bottom:none;border-radius:6px 6px 0 0;text-align:center;font-size:16px;color:#4a7fa0;-webkit-text-stroke:0.25px #4a7fa0;line-height:42.5px">Set</div>
<div class="a" style="left:1624.3px;top:148px;width:78.20000000000005px;height:41.5px;background:#ddeefb;border:1.3px solid #c8dbe9;border-bottom:none;border-radius:6px 6px 0 0;text-align:center;font-size:16px;color:#4a7fa0;-webkit-text-stroke:0.25px #4a7fa0;line-height:42.5px">Find</div>
<div class="a" style="left:1879.3px;top:152.7px;width:28.5px;height:28.2px;background:#22b845;border-radius:5px;box-shadow:1px 1.5px 2.5px rgba(0,0,0,.3)"></div>
<div class="a" style="left:1886.3px;top:159.5px;width:14.5px;height:14.8px;border:1.7px solid #f8f8f8;border-radius:2.5px"></div>
<div class="a" style="left:1886.3px;top:168.4px;width:14.5px;height:1.7px;background:#f0f8f0"></div>
<div class="a" style="left:1745px;top:200px;width:83px;height:31.5px;background:#a3c8e9;border-radius:4px;color:#fff;font-weight:700;font-size:12.5px;line-height:35.5px;text-align:center;letter-spacing:-0.5px;-webkit-text-stroke:0.2px #fff">+ Range</div>
<div class="a" style="left:1831.2px;top:200px;width:80px;height:31.5px;background:#a3c8e9;border-radius:4px;color:#fff;font-weight:700;font-size:12.5px;line-height:35.5px;text-align:center;letter-spacing:-0.5px;-webkit-text-stroke:0.2px #fff">- Range</div>
<div class="a" style="left:1368.5px;top:238.6px;width:180px;height:29px;border:1.3px solid #c9c9c9;border-radius:4px;background:#fff"></div>
<div class="a" style="left:1375.5px;top:243.9px;font-size:16px;line-height:20px;color:#777">Fringe Name</div>
<div class="a" style="left:1549.5px;top:244px;font-size:14px;line-height:18px;color:#3c7fc5;letter-spacing:-0.2px">SETUP</div>
<div class="a" style="left:1606.9px;top:244px;font-size:14px;line-height:18px;color:#c5c5c5;letter-spacing:-0.2px">CLEAR</div>
<div class="a" style="left:1652.7px;top:242.7px;width:19px;height:18.5px;border:1.2px solid #d6d6d6;border-radius:3px;background:#fff"></div>
<div class="a" style="left:1682.5px;top:242px;width:200px;height:35px;overflow:hidden"><div style="font-size:16px;line-height:19px;color:#222;white-space:normal;width:60px">Filter Applied</div></div>
<div class="a" style="left:1357px;top:276.7px;width:563px;height:35px;background:#f8f8f8;border-top:1.3px solid #e2e2e2;border-bottom:1.3px solid #e2e2e2"></div>
<div class="a" style="left:1414.6px;top:278px;width:1px;height:32.5px;background:#e4e4e4"></div>
<div class="a" style="left:1671.8px;top:278px;width:1px;height:32.5px;background:#e4e4e4"></div>
<div class="a" style="left:1808.5px;top:278px;width:1px;height:32.5px;background:#e4e4e4"></div>
<div class="a" style="left:1420.5px;top:284px;font-size:16px;line-height:20px;font-weight:700;color:#222">Name</div>
<svg class="a" style="left:1466px;top:285px" width="14" height="16" viewBox="0 0 14 16"><path d="M3.2 1.3 V13.8 M0.6 11 L3.2 14 L5.8 11" fill="none" stroke="#dedede" stroke-width="1.7"/><text x="10" y="6.6" font-size="6.8" font-weight="700" text-anchor="middle" fill="#dedede" font-family="Liberation Sans">A</text><text x="10" y="14.6" font-size="6.8" font-weight="700" text-anchor="middle" fill="#dedede" font-family="Liberation Sans">Z</text></svg>
<div class="a" style="left:1676.5px;top:284px;font-size:16px;line-height:20px;font-weight:700;color:#222">Rate</div>
<div class="a" style="left:1774.6px;top:284px;width:100px;text-align:right;font-size:16px;line-height:20px;font-weight:700;color:#222">Total</div>
<svg class="a" style="left:1878px;top:285px" width="14" height="16" viewBox="0 0 14 16"><path d="M3.2 1.3 V13.8 M0.6 11 L3.2 14 L5.8 11" fill="none" stroke="#dedede" stroke-width="1.7"/><text x="10" y="6.6" font-size="6.8" font-weight="700" text-anchor="middle" fill="#dedede" font-family="Liberation Sans">1</text><text x="10" y="14.6" font-size="6.8" font-weight="700" text-anchor="middle" fill="#dedede" font-family="Liberation Sans">9</text></svg>
<div class="a" style="left:1905.00px;top:284.70px;width:4px;height:4px;border-radius:50%;background:#222"></div>
<div class="a" style="left:1905.00px;top:291.50px;width:4px;height:4px;border-radius:50%;background:#222"></div>
<div class="a" style="left:1905.00px;top:298.30px;width:4px;height:4px;border-radius:50%;background:#222"></div>
<div class="a" style="left:1357px;top:311.60px;width:554px;height:35.00px;background:#fff"></div>
<div class="a" style="left:1362.45px;top:320.40px;width:3.3px;height:3.3px;border-radius:50%;background:#5a5a5a"></div>
<div class="a" style="left:1362.45px;top:325.90px;width:3.3px;height:3.3px;border-radius:50%;background:#5a5a5a"></div>
<div class="a" style="left:1362.45px;top:331.40px;width:3.3px;height:3.3px;border-radius:50%;background:#5a5a5a"></div>
<div class="a" style="left:1368.25px;top:320.40px;width:3.3px;height:3.3px;border-radius:50%;background:#5a5a5a"></div>
<div class="a" style="left:1368.25px;top:325.90px;width:3.3px;height:3.3px;border-radius:50%;background:#5a5a5a"></div>
<div class="a" style="left:1368.25px;top:331.40px;width:3.3px;height:3.3px;border-radius:50%;background:#5a5a5a"></div>
<div class="a" style="left:1385.5px;top:318.95px;width:19px;height:18.8px;border:1.2px solid #e3e3e3;border-radius:3.5px;background:#fff"></div>
<div class="a" style="left:1420px;top:319.65px;font-size:16px;line-height:20px;color:#222">CA Sales Tax</div>
<div class="a" style="left:1676.5px;top:319.65px;font-size:16px;line-height:20px;color:#222">9.75 %</div>
<div class="a" style="left:1799.4px;top:319.65px;width:100px;text-align:right;font-size:16px;line-height:20px;color:#222">$0</div>
<div class="a" style="left:1357px;top:346.30px;width:554px;height:33.20px;background:#f1f6fa"></div>
<div class="a" style="left:1362.45px;top:354.20px;width:3.3px;height:3.3px;border-radius:50%;background:#5a5a5a"></div>
<div class="a" style="left:1362.45px;top:359.70px;width:3.3px;height:3.3px;border-radius:50%;background:#5a5a5a"></div>
<div class="a" style="left:1362.45px;top:365.20px;width:3.3px;height:3.3px;border-radius:50%;background:#5a5a5a"></div>
<div class="a" style="left:1368.25px;top:354.20px;width:3.3px;height:3.3px;border-radius:50%;background:#5a5a5a"></div>
<div class="a" style="left:1368.25px;top:359.70px;width:3.3px;height:3.3px;border-radius:50%;background:#5a5a5a"></div>
<div class="a" style="left:1368.25px;top:365.20px;width:3.3px;height:3.3px;border-radius:50%;background:#5a5a5a"></div>
<div class="a" style="left:1385.5px;top:352.75px;width:19px;height:18.8px;border:1.2px solid #e3e3e3;border-radius:3.5px;background:#f6f9fb"></div>
<div class="a" style="left:1420px;top:353.45px;font-size:16px;line-height:20px;color:#222">DGA</div>
<div class="a" style="left:1676.5px;top:353.45px;font-size:16px;line-height:20px;color:#222">16.5 %</div>
<div class="a" style="left:1799.4px;top:353.45px;width:100px;text-align:right;font-size:16px;line-height:20px;color:#222">$0</div>
<div class="a" style="left:1357px;top:379.20px;width:554px;height:33.70px;background:#fff"></div>
<div class="a" style="left:1362.45px;top:387.35px;width:3.3px;height:3.3px;border-radius:50%;background:#5a5a5a"></div>
<div class="a" style="left:1362.45px;top:392.85px;width:3.3px;height:3.3px;border-radius:50%;background:#5a5a5a"></div>
<div class="a" style="left:1362.45px;top:398.35px;width:3.3px;height:3.3px;border-radius:50%;background:#5a5a5a"></div>
<div class="a" style="left:1368.25px;top:387.35px;width:3.3px;height:3.3px;border-radius:50%;background:#5a5a5a"></div>
<div class="a" style="left:1368.25px;top:392.85px;width:3.3px;height:3.3px;border-radius:50%;background:#5a5a5a"></div>
<div class="a" style="left:1368.25px;top:398.35px;width:3.3px;height:3.3px;border-radius:50%;background:#5a5a5a"></div>
<div class="a" style="left:1385.5px;top:385.90px;width:19px;height:18.8px;border:1.2px solid #e3e3e3;border-radius:3.5px;background:#fff"></div>
<div class="a" style="left:1420px;top:386.60px;font-size:16px;line-height:20px;color:#222">DGA-BTL</div>
<div class="a" style="left:1676.5px;top:386.60px;font-size:16px;line-height:20px;color:#222">17 %</div>
<div class="a" style="left:1799.4px;top:386.60px;width:100px;text-align:right;font-size:16px;line-height:20px;color:#222">$0</div>
<div class="a" style="left:1357.4px;top:412.60px;width:553px;height:33.00px;background:#fdebb9;border:2px solid #a9c5b2"></div>
<div class="a" style="left:1362.45px;top:420.35px;width:3.3px;height:3.3px;border-radius:50%;background:#5a5a5a"></div>
<div class="a" style="left:1362.45px;top:425.85px;width:3.3px;height:3.3px;border-radius:50%;background:#5a5a5a"></div>
<div class="a" style="left:1362.45px;top:431.35px;width:3.3px;height:3.3px;border-radius:50%;background:#5a5a5a"></div>
<div class="a" style="left:1368.25px;top:420.35px;width:3.3px;height:3.3px;border-radius:50%;background:#5a5a5a"></div>
<div class="a" style="left:1368.25px;top:425.85px;width:3.3px;height:3.3px;border-radius:50%;background:#5a5a5a"></div>
<div class="a" style="left:1368.25px;top:431.35px;width:3.3px;height:3.3px;border-radius:50%;background:#5a5a5a"></div>
<div class="a" style="left:1385.5px;top:418.90px;width:19px;height:18.8px;border:1.2px solid #e3e3e3;border-radius:3.5px;background:#fff9e8"></div>
<div class="a" style="left:1420px;top:419.60px;font-size:16px;line-height:20px;color:#222">DGA + VAC</div>
<div class="a" style="left:1676.5px;top:419.60px;font-size:16px;line-height:20px;color:#222">21 %</div>
<div class="a" style="left:1796.9px;top:419.60px;width:100px;text-align:right;font-size:16px;line-height:20px;color:#222">$0</div>
<div class="a" style="left:1357px;top:445.20px;width:554px;height:33.50px;background:#fff"></div>
<div class="a" style="left:1362.45px;top:453.25px;width:3.3px;height:3.3px;border-radius:50%;background:#5a5a5a"></div>
<div class="a" style="left:1362.45px;top:458.75px;width:3.3px;height:3.3px;border-radius:50%;background:#5a5a5a"></div>
<div class="a" style="left:1362.45px;top:464.25px;width:3.3px;height:3.3px;border-radius:50%;background:#5a5a5a"></div>
<div class="a" style="left:1368.25px;top:453.25px;width:3.3px;height:3.3px;border-radius:50%;background:#5a5a5a"></div>
<div class="a" style="left:1368.25px;top:458.75px;width:3.3px;height:3.3px;border-radius:50%;background:#5a5a5a"></div>
<div class="a" style="left:1368.25px;top:464.25px;width:3.3px;height:3.3px;border-radius:50%;background:#5a5a5a"></div>
<div class="a" style="left:1385.5px;top:451.80px;width:19px;height:18.8px;border:1.2px solid #e3e3e3;border-radius:3.5px;background:#fff"></div>
<div class="a" style="left:1420px;top:452.50px;font-size:16px;line-height:20px;color:#222">EMP</div>
<div class="a" style="left:1676.5px;top:452.50px;font-size:16px;line-height:20px;color:#222">24.5 %</div>
<div class="a" style="left:1799.4px;top:452.50px;width:100px;text-align:right;font-size:16px;line-height:20px;color:#222">$0</div>
<div class="a" style="left:1357px;top:478.40px;width:554px;height:33.50px;background:#f1f6fa"></div>
<div class="a" style="left:1362.45px;top:486.45px;width:3.3px;height:3.3px;border-radius:50%;background:#5a5a5a"></div>
<div class="a" style="left:1362.45px;top:491.95px;width:3.3px;height:3.3px;border-radius:50%;background:#5a5a5a"></div>
<div class="a" style="left:1362.45px;top:497.45px;width:3.3px;height:3.3px;border-radius:50%;background:#5a5a5a"></div>
<div class="a" style="left:1368.25px;top:486.45px;width:3.3px;height:3.3px;border-radius:50%;background:#5a5a5a"></div>
<div class="a" style="left:1368.25px;top:491.95px;width:3.3px;height:3.3px;border-radius:50%;background:#5a5a5a"></div>
<div class="a" style="left:1368.25px;top:497.45px;width:3.3px;height:3.3px;border-radius:50%;background:#5a5a5a"></div>
<div class="a" style="left:1385.5px;top:485.00px;width:19px;height:18.8px;border:1.2px solid #e3e3e3;border-radius:3.5px;background:#f6f9fb"></div>
<div class="a" style="left:1420px;top:485.70px;font-size:16px;line-height:20px;color:#222">IA12</div>
<div class="a" style="left:1676.5px;top:485.70px;font-size:16px;line-height:20px;color:#222">80.49 Day</div>
<div class="a" style="left:1799.4px;top:485.70px;width:100px;text-align:right;font-size:16px;line-height:20px;color:#222">$0</div>
<div class="a" style="left:1357px;top:511.60px;width:554px;height:33.50px;background:#fff"></div>
<div class="a" style="left:1362.45px;top:519.65px;width:3.3px;height:3.3px;border-radius:50%;background:#5a5a5a"></div>
<div class="a" style="left:1362.45px;top:525.15px;width:3.3px;height:3.3px;border-radius:50%;background:#5a5a5a"></div>
<div class="a" style="left:1362.45px;top:530.65px;width:3.3px;height:3.3px;border-radius:50%;background:#5a5a5a"></div>
<div class="a" style="left:1368.25px;top:519.65px;width:3.3px;height:3.3px;border-radius:50%;background:#5a5a5a"></div>
<div class="a" style="left:1368.25px;top:525.15px;width:3.3px;height:3.3px;border-radius:50%;background:#5a5a5a"></div>
<div class="a" style="left:1368.25px;top:530.65px;width:3.3px;height:3.3px;border-radius:50%;background:#5a5a5a"></div>
<div class="a" style="left:1385.5px;top:518.20px;width:19px;height:18.8px;border:1.2px solid #e3e3e3;border-radius:3.5px;background:#fff"></div>
<div class="a" style="left:1420px;top:518.90px;font-size:16px;line-height:20px;color:#222">IA10</div>
<div class="a" style="left:1676.5px;top:518.90px;font-size:16px;line-height:20px;color:#222">67.075 Day</div>
<div class="a" style="left:1799.4px;top:518.90px;width:100px;text-align:right;font-size:16px;line-height:20px;color:#222">$0</div>
<div class="a" style="left:1357px;top:544.80px;width:554px;height:33.50px;background:#f1f6fa"></div>
<div class="a" style="left:1362.45px;top:552.85px;width:3.3px;height:3.3px;border-radius:50%;background:#5a5a5a"></div>
<div class="a" style="left:1362.45px;top:558.35px;width:3.3px;height:3.3px;border-radius:50%;background:#5a5a5a"></div>
<div class="a" style="left:1362.45px;top:563.85px;width:3.3px;height:3.3px;border-radius:50%;background:#5a5a5a"></div>
<div class="a" style="left:1368.25px;top:552.85px;width:3.3px;height:3.3px;border-radius:50%;background:#5a5a5a"></div>
<div class="a" style="left:1368.25px;top:558.35px;width:3.3px;height:3.3px;border-radius:50%;background:#5a5a5a"></div>
<div class="a" style="left:1368.25px;top:563.85px;width:3.3px;height:3.3px;border-radius:50%;background:#5a5a5a"></div>
<div class="a" style="left:1385.5px;top:551.40px;width:19px;height:18.8px;border:1.2px solid #e3e3e3;border-radius:3.5px;background:#f6f9fb"></div>
<div class="a" style="left:1420px;top:552.10px;font-size:16px;line-height:20px;color:#222">IA8</div>
<div class="a" style="left:1676.5px;top:552.10px;font-size:16px;line-height:20px;color:#222">53.66 Day</div>
<div class="a" style="left:1799.4px;top:552.10px;width:100px;text-align:right;font-size:16px;line-height:20px;color:#222">$0</div>
<div class="a" style="left:1357px;top:578.00px;width:554px;height:33.50px;background:#fff"></div>
<div class="a" style="left:1362.45px;top:586.05px;width:3.3px;height:3.3px;border-radius:50%;background:#5a5a5a"></div>
<div class="a" style="left:1362.45px;top:591.55px;width:3.3px;height:3.3px;border-radius:50%;background:#5a5a5a"></div>
<div class="a" style="left:1362.45px;top:597.05px;width:3.3px;height:3.3px;border-radius:50%;background:#5a5a5a"></div>
<div class="a" style="left:1368.25px;top:586.05px;width:3.3px;height:3.3px;border-radius:50%;background:#5a5a5a"></div>
<div class="a" style="left:1368.25px;top:591.55px;width:3.3px;height:3.3px;border-radius:50%;background:#5a5a5a"></div>
<div class="a" style="left:1368.25px;top:597.05px;width:3.3px;height:3.3px;border-radius:50%;background:#5a5a5a"></div>
<div class="a" style="left:1385.5px;top:584.60px;width:19px;height:18.8px;border:1.2px solid #e3e3e3;border-radius:3.5px;background:#fff"></div>
<div class="a" style="left:1420px;top:585.30px;font-size:16px;line-height:20px;color:#222">IA9</div>
<div class="a" style="left:1676.5px;top:585.30px;font-size:16px;line-height:20px;color:#222">60.3675 Day</div>
<div class="a" style="left:1799.4px;top:585.30px;width:100px;text-align:right;font-size:16px;line-height:20px;color:#222">$0</div>
<div class="a" style="left:1911px;top:311.5px;width:9px;height:300px;background:#e4e4e4"></div>
<div class="a" style="left:1911.7px;top:488px;width:8.3px;height:123.5px;background:#a9a9a9;border-radius:5px"></div>
<div class="a" style="left:1357px;top:611.3px;width:563px;height:29.5px;background:#e4e4e4"></div>
<div class="a" style="left:1367.5px;top:616.6px;font-size:13.6px;line-height:18px;color:#222"><b>Aggregate Total</b>: 0.0%</div>
<div class="a" style="left:1712px;top:616.6px;width:200px;text-align:right;font-size:13.6px;line-height:18px;color:#222"><b>Fringe Total Amt</b>: 0</div>
<div class="a" style="left:1357px;top:640.8px;width:563px;height:10.7px;background:#d8d8d8"></div>
<div class="a" style="left:1634px;top:644.5px;width:23px;height:1px;background:#a0a0a0"></div>
<div class="a" style="left:1634px;top:647.3px;width:23px;height:1px;background:#a0a0a0"></div>
<div class="a" style="left:1357px;top:651.5px;width:563px;height:47px;background:#edf7fd;border-bottom:1.3px solid #d8d8d8"></div>
<div class="a" style="left:1361.7px;top:656.6px;width:65.89999999999986px;height:42.89999999999998px;background:#fff;border:1.3px solid #d4d4d4;border-bottom:none;border-radius:6px 6px 0 0;text-align:center;font-size:16px;font-weight:700;color:#222;line-height:43.39999999999998px">Gr</div>
<div class="a" style="left:1429.7px;top:656.6px;width:72.79999999999995px;height:41.39999999999998px;background:#ddeefb;border:1.3px solid #c8dbe9;border-bottom:none;border-radius:6px 6px 0 0;text-align:center;font-size:16px;color:#4a7fa0;-webkit-text-stroke:0.25px #4a7fa0;line-height:42.39999999999998px">Cur</div>
<div class="a" style="left:1505.6px;top:656.6px;width:70.70000000000005px;height:41.39999999999998px;background:#ddeefb;border:1.3px solid #c8dbe9;border-bottom:none;border-radius:6px 6px 0 0;text-align:center;font-size:16px;color:#4a7fa0;-webkit-text-stroke:0.25px #4a7fa0;line-height:42.39999999999998px">Loc</div>
<div class="a" style="left:1578.7px;top:656.6px;width:89.09999999999991px;height:41.39999999999998px;background:#ddeefb;border:1.3px solid #c8dbe9;border-bottom:none;border-radius:6px 6px 0 0;text-align:center;font-size:16px;color:#4a7fa0;-webkit-text-stroke:0.25px #4a7fa0;line-height:42.39999999999998px">Notes</div>
<div class="a" style="left:1670.2px;top:656.6px;width:64.39999999999986px;height:41.39999999999998px;background:#ddeefb;border:1.3px solid #c8dbe9;border-bottom:none;border-radius:6px 6px 0 0;text-align:center;font-size:16px;color:#4a7fa0;-webkit-text-stroke:0.25px #4a7fa0;line-height:42.39999999999998px">Sh</div>
<div class="a" style="left:1357px;top:699px;width:563px;height:408px;background:#fff"></div>
<div class="a" style="left:1368.5px;top:707px;width:180px;height:29px;border:1.3px solid #c9c9c9;border-radius:4px;background:#fff"></div>
<div class="a" style="left:1375.5px;top:711.5px;font-size:16px;line-height:20px;color:#777">Group Name</div>
<div class="a" style="left:1617px;top:712px;font-size:14px;line-height:18px;color:#3c7fc5;letter-spacing:-0.2px">SETUP</div>
<div class="a" style="left:1674.7px;top:712px;font-size:14px;line-height:18px;color:#c5c5c5;letter-spacing:-0.2px">CLEAR</div>
<div class="a" style="left:1789px;top:710.4px;width:19px;height:18.6px;border:1.2px solid #d6d6d6;border-radius:3px;background:#fff"></div>
<div class="a" style="left:1819px;top:709.5px;font-size:16px;line-height:20px;color:#222">Filter Applied</div>
<div class="a" style="left:1357px;top:745px;width:563px;height:35px;background:#f8f8f8;border-top:1.3px solid #e2e2e2;border-bottom:1.3px solid #e2e2e2"></div>
<div class="a" style="left:1414.6px;top:746.3px;width:1px;height:32.5px;background:#e4e4e4"></div>
<div class="a" style="left:1648px;top:746.3px;width:1px;height:32.5px;background:#e4e4e4"></div>
<div class="a" style="left:1705.6px;top:746.3px;width:1px;height:32.5px;background:#e4e4e4"></div>
<div class="a" style="left:1774.4px;top:746.3px;width:1px;height:32.5px;background:#e4e4e4"></div>
<div class="a" style="left:1420.5px;top:752px;font-size:16px;line-height:20px;font-weight:700;color:#222">Name</div>
<svg class="a" style="left:1466px;top:753px" width="14" height="16" viewBox="0 0 14 16"><path d="M3.2 1.3 V13.8 M0.6 11 L3.2 14 L5.8 11" fill="none" stroke="#dedede" stroke-width="1.7"/><text x="10" y="6.6" font-size="6.8" font-weight="700" text-anchor="middle" fill="#dedede" font-family="Liberation Sans">A</text><text x="10" y="14.6" font-size="6.8" font-weight="700" text-anchor="middle" fill="#dedede" font-family="Liberation Sans">Z</text></svg>
<div class="a" style="left:1654px;top:752px;font-size:16px;line-height:20px;font-weight:700;color:#222">Color</div>
<div class="a" style="left:1648px;top:752px;width:101px;text-align:right;font-size:16px;line-height:20px;font-weight:700;color:#222">#</div>
<svg class="a" style="left:1752px;top:753px" width="14" height="16" viewBox="0 0 14 16"><path d="M3.2 1.3 V13.8 M0.6 11 L3.2 14 L5.8 11" fill="none" stroke="#dedede" stroke-width="1.7"/><text x="10" y="6.6" font-size="6.8" font-weight="700" text-anchor="middle" fill="#dedede" font-family="Liberation Sans">1</text><text x="10" y="14.6" font-size="6.8" font-weight="700" text-anchor="middle" fill="#dedede" font-family="Liberation Sans">9</text></svg>
<div class="a" style="left:1775px;top:752px;width:100px;text-align:right;font-size:16px;line-height:20px;font-weight:700;color:#222">Total Amt</div>
<svg class="a" style="left:1878px;top:753px" width="14" height="16" viewBox="0 0 14 16"><path d="M3.2 1.3 V13.8 M0.6 11 L3.2 14 L5.8 11" fill="none" stroke="#dedede" stroke-width="1.7"/><text x="10" y="6.6" font-size="6.8" font-weight="700" text-anchor="middle" fill="#dedede" font-family="Liberation Sans">1</text><text x="10" y="14.6" font-size="6.8" font-weight="700" text-anchor="middle" fill="#dedede" font-family="Liberation Sans">9</text></svg>
<div class="a" style="left:1905.00px;top:752.70px;width:4px;height:4px;border-radius:50%;background:#222"></div>
<div class="a" style="left:1905.00px;top:759.50px;width:4px;height:4px;border-radius:50%;background:#222"></div>
<div class="a" style="left:1905.00px;top:766.30px;width:4px;height:4px;border-radius:50%;background:#222"></div>
<div class="a" style="left:1357px;top:780.00px;width:563px;height:33.50px;background:#f1f6fa"></div>
<div class="a" style="left:1362.45px;top:788.05px;width:3.3px;height:3.3px;border-radius:50%;background:#5a5a5a"></div>
<div class="a" style="left:1362.45px;top:793.55px;width:3.3px;height:3.3px;border-radius:50%;background:#5a5a5a"></div>
<div class="a" style="left:1362.45px;top:799.05px;width:3.3px;height:3.3px;border-radius:50%;background:#5a5a5a"></div>
<div class="a" style="left:1368.25px;top:788.05px;width:3.3px;height:3.3px;border-radius:50%;background:#5a5a5a"></div>
<div class="a" style="left:1368.25px;top:793.55px;width:3.3px;height:3.3px;border-radius:50%;background:#5a5a5a"></div>
<div class="a" style="left:1368.25px;top:799.05px;width:3.3px;height:3.3px;border-radius:50%;background:#5a5a5a"></div>
<div class="a" style="left:1385.5px;top:786.60px;width:19px;height:18.8px;border:1.2px solid #e3e3e3;border-radius:3.5px;background:#f6f9fb"></div>
<div class="a" style="left:1420px;top:786.60px;font-size:16px;line-height:20px;color:#222">Utah</div>
<div class="a" style="left:1683px;top:788.10px;width:20px;height:20px;border:1.2px solid #d8d8d8;border-radius:4px;background:#fff"></div>
<div class="a" style="left:1686px;top:791.10px;width:14px;height:14px;background:#5f9e00"></div>
<div class="a" style="left:1679px;top:787.00px;width:100px;text-align:right;font-size:16px;line-height:20px;color:#222">1</div>
<div class="a" style="left:1811px;top:787.00px;width:100px;text-align:right;font-size:16px;line-height:20px;color:#222">$0</div>
<div class="a" style="left:1357px;top:813.20px;width:563px;height:33.50px;background:#fff"></div>
<div class="a" style="left:1362.45px;top:821.25px;width:3.3px;height:3.3px;border-radius:50%;background:#5a5a5a"></div>
<div class="a" style="left:1362.45px;top:826.75px;width:3.3px;height:3.3px;border-radius:50%;background:#5a5a5a"></div>
<div class="a" style="left:1362.45px;top:832.25px;width:3.3px;height:3.3px;border-radius:50%;background:#5a5a5a"></div>
<div class="a" style="left:1368.25px;top:821.25px;width:3.3px;height:3.3px;border-radius:50%;background:#5a5a5a"></div>
<div class="a" style="left:1368.25px;top:826.75px;width:3.3px;height:3.3px;border-radius:50%;background:#5a5a5a"></div>
<div class="a" style="left:1368.25px;top:832.25px;width:3.3px;height:3.3px;border-radius:50%;background:#5a5a5a"></div>
<div class="a" style="left:1385.5px;top:819.80px;width:19px;height:18.8px;border:1.2px solid #e3e3e3;border-radius:3.5px;background:#fff"></div>
<svg class="a" style="left:1385.5px;top:819.80px" width="19" height="19" viewBox="0 0 19 19"><path d="M3.3 9.6 L8.6 13.6 L15.9 4.9" fill="none" stroke="#808080" stroke-width="2.9"/></svg>
<div class="a" style="left:1420px;top:819.80px;font-size:16px;line-height:20px;color:#222">Suppress</div>
<div class="a" style="left:1683px;top:821.30px;width:20px;height:20px;border:1.2px solid #d8d8d8;border-radius:4px;background:#fff"></div>
<div class="a" style="left:1686px;top:824.30px;width:14px;height:14px;background:#ead7f2"></div>
<div class="a" style="left:1679px;top:820.20px;width:100px;text-align:right;font-size:16px;line-height:20px;color:#222">108</div>
<div class="a" style="left:1811px;top:820.20px;width:100px;text-align:right;font-size:16px;line-height:20px;color:#222">Excl</div>
<div class="a" style="left:1357.4px;top:847.40px;width:563px;height:33.20px;background:#fdebb9;border:2px solid #a9c5b2;border-right:none"></div>
<div class="a" style="left:1362.45px;top:854.45px;width:3.3px;height:3.3px;border-radius:50%;background:#5a5a5a"></div>
<div class="a" style="left:1362.45px;top:859.95px;width:3.3px;height:3.3px;border-radius:50%;background:#5a5a5a"></div>
<div class="a" style="left:1362.45px;top:865.45px;width:3.3px;height:3.3px;border-radius:50%;background:#5a5a5a"></div>
<div class="a" style="left:1368.25px;top:854.45px;width:3.3px;height:3.3px;border-radius:50%;background:#5a5a5a"></div>
<div class="a" style="left:1368.25px;top:859.95px;width:3.3px;height:3.3px;border-radius:50%;background:#5a5a5a"></div>
<div class="a" style="left:1368.25px;top:865.45px;width:3.3px;height:3.3px;border-radius:50%;background:#5a5a5a"></div>
<div class="a" style="left:1385.5px;top:853.00px;width:19px;height:18.8px;border:1.2px solid #e3e3e3;border-radius:3.5px;background:#fff6df"></div>
<svg class="a" style="left:1385.5px;top:853.00px" width="19" height="19" viewBox="0 0 19 19"><path d="M3.3 9.6 L8.6 13.6 L15.9 4.9" fill="none" stroke="#7c7660" stroke-width="2.9"/></svg>
<div class="a" style="left:1420px;top:853.00px;font-size:16px;line-height:20px;color:#222">EXCL</div>
<div class="a" style="left:1683px;top:854.50px;width:20px;height:20px;border:1.2px solid #d8d8d8;border-radius:4px;background:#fff"></div>
<svg class="a" style="left:1683px;top:854.50px" width="20" height="20" viewBox="0 0 20 20"><rect x="3.5" y="3.5" width="13" height="13" fill="none" stroke="#cfcfcf" stroke-width="1"/><path d="M4 16 L16 4" stroke="#f05050" stroke-width="1.2"/></svg>
<div class="a" style="left:1679px;top:853.40px;width:100px;text-align:right;font-size:16px;line-height:20px;color:#222">11</div>
<div class="a" style="left:1809.8px;top:853.40px;width:100px;text-align:right;font-size:16px;line-height:20px;color:#222">$58,700</div>
<div class="a" style="left:1357px;top:879.60px;width:563px;height:33.50px;background:#fff"></div>
<div class="a" style="left:1362.45px;top:887.65px;width:3.3px;height:3.3px;border-radius:50%;background:#5a5a5a"></div>
<div class="a" style="left:1362.45px;top:893.15px;width:3.3px;height:3.3px;border-radius:50%;background:#5a5a5a"></div>
<div class="a" style="left:1362.45px;top:898.65px;width:3.3px;height:3.3px;border-radius:50%;background:#5a5a5a"></div>
<div class="a" style="left:1368.25px;top:887.65px;width:3.3px;height:3.3px;border-radius:50%;background:#5a5a5a"></div>
<div class="a" style="left:1368.25px;top:893.15px;width:3.3px;height:3.3px;border-radius:50%;background:#5a5a5a"></div>
<div class="a" style="left:1368.25px;top:898.65px;width:3.3px;height:3.3px;border-radius:50%;background:#5a5a5a"></div>
<div class="a" style="left:1385.5px;top:886.20px;width:19px;height:18.8px;border:1.2px solid #e3e3e3;border-radius:3.5px;background:#fff"></div>
<div class="a" style="left:1420px;top:886.20px;font-size:16px;line-height:20px;color:#222">D6</div>
<div class="a" style="left:1683px;top:887.70px;width:20px;height:20px;border:1.2px solid #d8d8d8;border-radius:4px;background:#fff"></div>
<svg class="a" style="left:1683px;top:887.70px" width="20" height="20" viewBox="0 0 20 20"><rect x="3.5" y="3.5" width="13" height="13" fill="none" stroke="#cfcfcf" stroke-width="1"/><path d="M4 16 L16 4" stroke="#f05050" stroke-width="1.2"/></svg>
<div class="a" style="left:1679px;top:886.60px;width:100px;text-align:right;font-size:16px;line-height:20px;color:#222">29</div>
<div class="a" style="left:1811px;top:886.60px;width:100px;text-align:right;font-size:16px;line-height:20px;color:#222">Excl</div>
<div class="a" style="left:1357px;top:1107.8px;width:563px;height:28.5px;background:#e4e4e4"></div>
<div class="a" style="left:1712px;top:1112.6px;width:200px;text-align:right;font-size:13.6px;line-height:18px;color:#222"><b>Groups Total Amt</b>: 0</div>
<div class="a" style="left:0;top:1136px;width:1920px;height:32px;background:#e4e4e4;border-top:1px solid #d2d2d2"></div>
<div class="a" style="left:3.75px;top:1145.8px;font-size:13.6px;line-height:18px;color:#222"><b>GT:</b><span style="margin-left:6px">$2,485,298</span></div>
<div class="a" style="left:129.6px;top:1145.8px;font-size:13.6px;line-height:18px;color:#222"><b>ATL &amp; BTL:</b><span style="margin-left:6px">$2,378,856</span></div>
<div class="a" style="left:307.9px;top:1145.8px;font-size:13.6px;line-height:18px;color:#222"><b>Total ATL:</b><span style="margin-left:6px">$780,097</span></div>
<div class="a" style="left:465px;top:1145.8px;font-size:13.6px;line-height:18px;color:#222"><b>Total BTL:</b><span style="margin-left:6px">$1,598,759</span></div>
<div class="a" style="left:635.4px;top:1145.8px;font-size:13.6px;line-height:18px;color:#222"><b>Credits:</b><span style="margin-left:6px">($12,500)</span></div>
<div class="a" style="left:1672.5px;top:1145.8px;font-size:13.6px;line-height:18px;color:#222"><b>Sess:</b><span style="margin-left:6px">$1,285,376</span></div>
<div class="a" style="left:1812.5px;top:1145.8px;font-size:13.6px;line-height:18px;color:#222"><b>Chng:</b><span style="margin-left:6px">($16,994)</span></div>
<div class="a" style="left:1618px;top:1143px;width:23px;height:23px;background:#22b845;border-radius:4px"></div>
<svg class="a" style="left:1618px;top:1143px" width="23" height="23" viewBox="0 0 23 23"><path d="M6.4 10.3 A5.3 5.3 0 0 1 14.8 9.2" fill="none" stroke="#fff" stroke-width="1.6"/><path d="M16.7 5.9 V10.8 H12.1 Z" fill="#fff"/><path d="M16.1 12.9 A5.3 5.3 0 0 1 7.9 15.1" fill="none" stroke="#fff" stroke-width="1.6"/><path d="M5.6 17.7 V13.2 H10.1 Z" fill="#fff"/></svg>
</body></html>
